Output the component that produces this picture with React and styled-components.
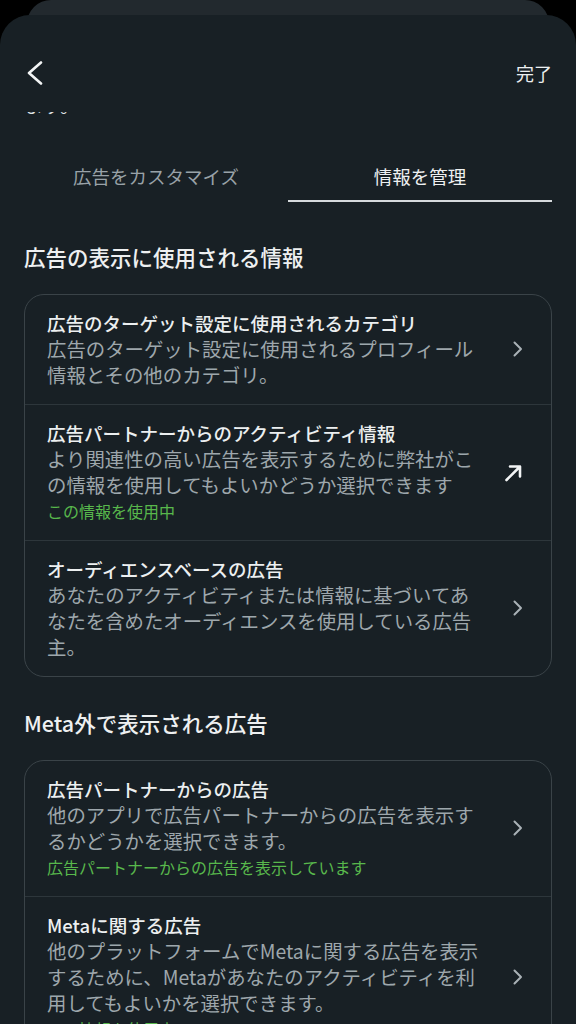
import styled, { createGlobalStyle } from "styled-components";

const GlobalStyle = createGlobalStyle`
  html, body {
    margin: 0;
    padding: 0;
    background: #000;
  }
  body {
    font-family: "Noto Sans CJK JP", "Noto Sans", sans-serif;
    -webkit-font-smoothing: antialiased;
  }
`;

const sections = [
  {
    title: "広告の表示に使用される情報",
    items: [
      {
        title: "広告のターゲット設定に使用されるカテゴリ",
        desc: "広告のターゲット設定に使用されるプロフィール情報とその他のカテゴリ。",
        icon: "chevron",
      },
      {
        title: "広告パートナーからのアクティビティ情報",
        desc: "より関連性の高い広告を表示するために弊社がこの情報を使用してもよいかどうか選択できます",
        status: "この情報を使用中",
        icon: "external",
      },
      {
        title: "オーディエンスベースの広告",
        desc: "あなたのアクティビティまたは情報に基づいてあなたを含めたオーディエンスを使用している広告主。",
        icon: "chevron",
      },
    ],
  },
  {
    title: "Meta外で表示される広告",
    items: [
      {
        title: "広告パートナーからの広告",
        desc: "他のアプリで広告パートナーからの広告を表示するかどうかを選択できます。",
        status: "広告パートナーからの広告を表示しています",
        icon: "chevron",
      },
      {
        title: "Metaに関する広告",
        desc: "他のプラットフォームでMetaに関する広告を表示するために、Metaがあなたのアクティビティを利用してもよいかを選択できます。",
        status: "この情報を使用中",
        icon: "chevron",
      },
    ],
  },
];

function ChevronRight() {
  return (
    <svg width="12" height="18" viewBox="0 0 12 18" fill="none">
      <path d="M3.5 2.5l6.5 6.5-6.5 6.5" stroke="#a9b1b6" strokeWidth="2" strokeLinecap="round" strokeLinejoin="round" />
    </svg>
  );
}

function ExternalArrow() {
  return (
    <svg width="24" height="24" viewBox="0 0 24 24" fill="none">
      <path d="M1.5 20L14.5 7M5 6.5h10v10" stroke="#f2f4f5" strokeWidth="2.6" strokeLinecap="round" strokeLinejoin="round" />
    </svg>
  );
}

function BackChevron() {
  return (
    <svg width="20" height="24" viewBox="0 0 20 24" fill="none">
      <path d="M16 1.5L4 12l12 10.5" stroke="#f2f4f5" strokeWidth="2.6" strokeLinecap="round" strokeLinejoin="round" />
    </svg>
  );
}

export default function App() {
  return (
    <Screen>
      <GlobalStyle />
      <BackSheet />
      <Sheet>
        <NavBar>
          <BackButton aria-label="戻る">
            <BackChevron />
          </BackButton>
          <DoneButton>完了</DoneButton>
        </NavBar>
        <Remnant>
          <span>ます。</span>
        </Remnant>
        <Tabs>
          <Tab>広告をカスタマイズ</Tab>
          <Tab $active>情報を管理</Tab>
        </Tabs>
        {sections.map((section) => (
          <Section key={section.title}>
            <SectionTitle>{section.title}</SectionTitle>
            <Card>
              {section.items.map((item) => (
                <Row key={item.title}>
                  <RowText>
                    <RowTitle>{item.title}</RowTitle>
                    <RowDesc>{item.desc}</RowDesc>
                    {item.status && <RowStatus>{item.status}</RowStatus>}
                  </RowText>
                  <RowIcon>
                    {item.icon === "external" ? <ExternalArrow /> : <ChevronRight />}
                  </RowIcon>
                </Row>
              ))}
            </Card>
          </Section>
        ))}
      </Sheet>
    </Screen>
  );
}

// --- Styled Components ---

const Screen = styled.div`
  width: 576px;
  height: 1024px;
  overflow: hidden;
  background: #000;
  display: flex;
  flex-direction: column;
`;

const BackSheet = styled.div`
  flex: none;
  height: 34px;
  margin: 0 27px;
  background: #22292e;
  border-radius: 24px 24px 0 0;
`;

const Sheet = styled.div`
  flex: 1;
  margin-top: -19px;
  padding: 0 24px;
  background: #182025;
  border-radius: 30px 30px 0 0;
  color: #eceff0;
`;

const NavBar = styled.div`
  display: flex;
  align-items: center;
  justify-content: space-between;
  height: 28px;
  padding: 44px 0 25px;
`;

const BackButton = styled.button`
  display: flex;
  align-items: center;
  padding: 0;
  margin-left: 1px;
  border: 0;
  background: none;
`;

const DoneButton = styled.span`
  font-size: 18px;
  line-height: 28px;
  color: #eceff0;
`;

const Remnant = styled.div`
  height: 6px;
  overflow: hidden;
  font-size: 19px;
  line-height: 26px;
  color: #dfe3e5;

  span {
    display: block;
    margin-top: -20px;
  }
`;

const Tabs = styled.div`
  display: grid;
  grid-template-columns: 1fr 1fr;
  margin-top: 45px;
`;

const Tab = styled.div`
  text-align: center;
  font-size: 18.5px;
  line-height: 26px;
  padding-bottom: 11px;
  color: ${(p) => (p.$active ? "#eef0f1" : "#99a2a8")};
  border-bottom: 2px solid ${(p) => (p.$active ? "#d6dadd" : "transparent")};
`;

const Section = styled.section`
  margin-top: 31px;

  &:first-of-type {
    margin-top: 40px;
  }
`;

const SectionTitle = styled.h2`
  margin: 0 0 22px;
  font-size: 21.5px;
  line-height: 30px;
  font-weight: 500;
  color: #eef0f1;
`;

const Card = styled.div`
  border: 1px solid #3a4348;
  border-radius: 20px;
  overflow: hidden;
`;

const Row = styled.div`
  display: grid;
  grid-template-columns: 1fr 24px;
  column-gap: 25px;
  align-items: center;
  padding: 15px 22px 16px;

  & + & {
    border-top: 1px solid #2d363b;
  }
`;

const RowText = styled.div`
  min-width: 0;
`;

const RowTitle = styled.div`
  font-size: 18.5px;
  line-height: 26px;
  font-weight: 500;
  color: #eceff0;
`;

const RowDesc = styled.div`
  font-size: 19.4px;
  line-height: 26px;
  color: #9ea7ac;
`;

const RowStatus = styled.div`
  font-size: 16px;
  line-height: 26px;
  color: #58b84c;
`;

const RowIcon = styled.div`
  display: flex;
  justify-content: center;
  align-items: center;
`;
